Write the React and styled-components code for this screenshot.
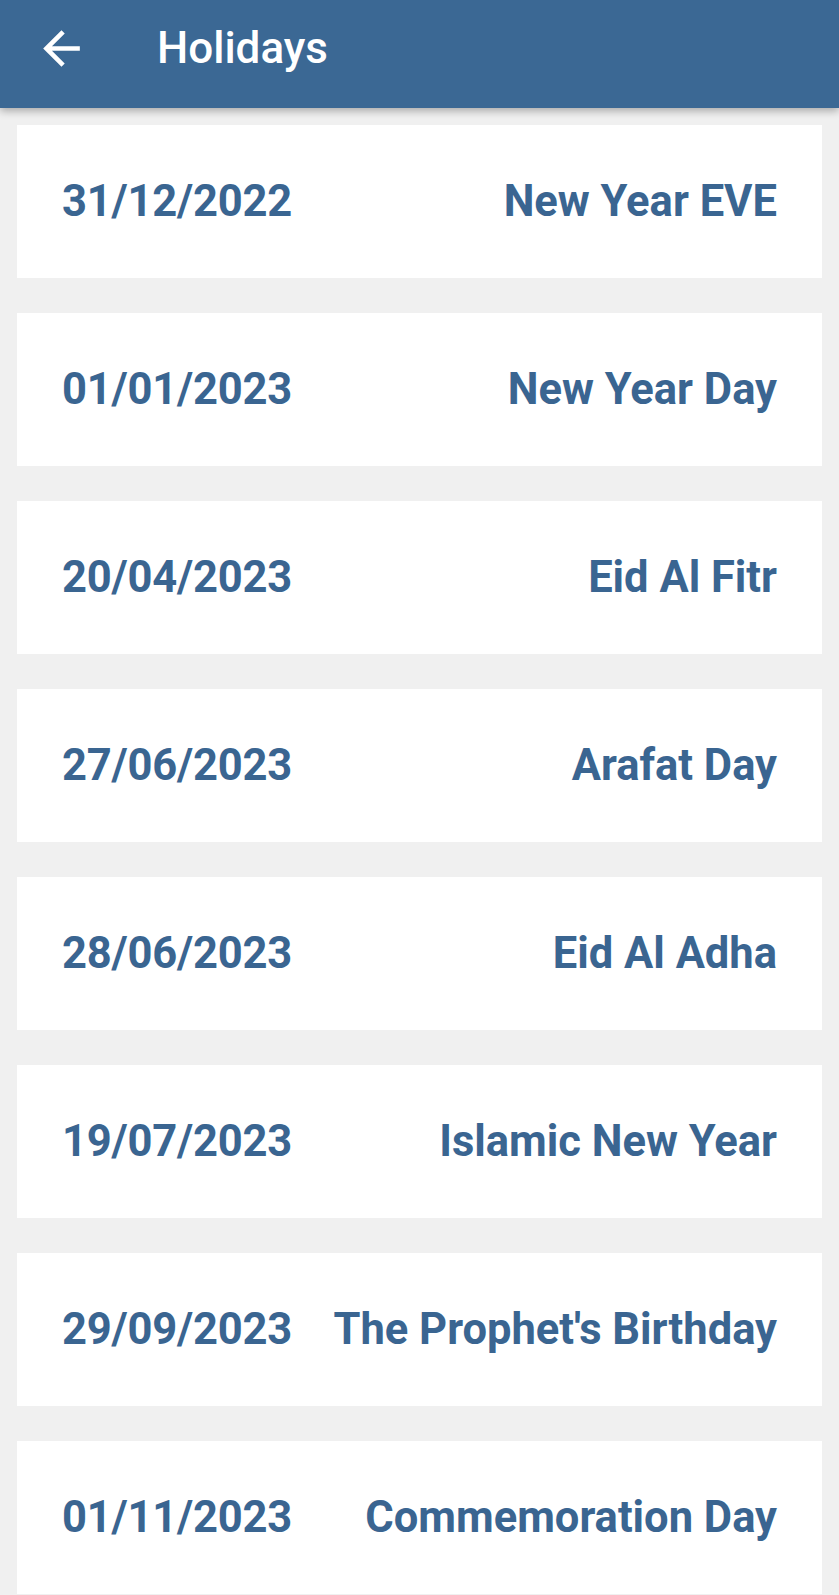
import styled, { createGlobalStyle } from "styled-components";

const holidays = [
	{ date: "31/12/2022", name: "New Year EVE" },
	{ date: "01/01/2023", name: "New Year Day" },
	{ date: "20/04/2023", name: "Eid Al Fitr" },
	{ date: "27/06/2023", name: "Arafat Day" },
	{ date: "28/06/2023", name: "Eid Al Adha" },
	{ date: "19/07/2023", name: "Islamic New Year" },
	{ date: "29/09/2023", name: "The Prophet's Birthday" },
	{ date: "01/11/2023", name: "Commemoration Day" },
];

function App() {
	return (
		<>
			<GlobalStyle />
			<Page>
				<AppBar>
					<BackButton aria-label="Back">
						<svg viewBox="0 0 24 24" width="55" height="55" fill="#fff">
							<path d="M20 11H7.83l5.59-5.59L12 4l-8 8 8 8 1.41-1.41L7.83 13H20v-2z" />
						</svg>
					</BackButton>
					<Title>Holidays</Title>
				</AppBar>

				<List>
					{holidays.map((holiday) => (
						<Card key={holiday.date}>
							<DateText>{holiday.date}</DateText>
							<NameText>{holiday.name}</NameText>
						</Card>
					))}
				</List>
			</Page>
		</>
	);
}

export default App;

const GlobalStyle = createGlobalStyle`
	html, body {
		margin: 0;
		padding: 0;
		background: #f0f0f0;
		font-family: Roboto, "Liberation Sans", sans-serif;
	}
`;

const Page = styled.div`
	display: flex;
	flex-direction: column;
	min-height: 100vh;
	overflow: hidden;
`;

const AppBar = styled.header`
	position: relative;
	z-index: 1;
	display: flex;
	align-items: center;
	box-sizing: border-box;
	height: 108px;
	padding: 0 0 12px 34px;
	background-color: #3b6894;
	box-shadow: 0 3px 8px rgba(0, 0, 0, 0.3);
`;

const BackButton = styled.button`
	display: flex;
	padding: 0;
	margin: 0 68px 0 0;
	border: none;
	background: none;
`;

const Title = styled.h1`
	margin: 0;
	color: #fff;
	font-size: 44px;
	font-weight: 500;
	letter-spacing: 0;
`;

const List = styled.ul`
	display: flex;
	flex-direction: column;
	gap: 35px;
	margin: 0;
	padding: 17px 17px 0;
	list-style: none;
`;

const Card = styled.li`
	display: flex;
	align-items: center;
	justify-content: space-between;
	height: 153px;
	padding: 0 45px;
	background: #fff;
	color: #3a6591;
	font-size: 43.5px;
	font-weight: 700;
`;

const DateText = styled.span`
	white-space: nowrap;
	letter-spacing: -0.2px;
`;

const NameText = styled.span`
	text-align: right;
	white-space: nowrap;
`;
